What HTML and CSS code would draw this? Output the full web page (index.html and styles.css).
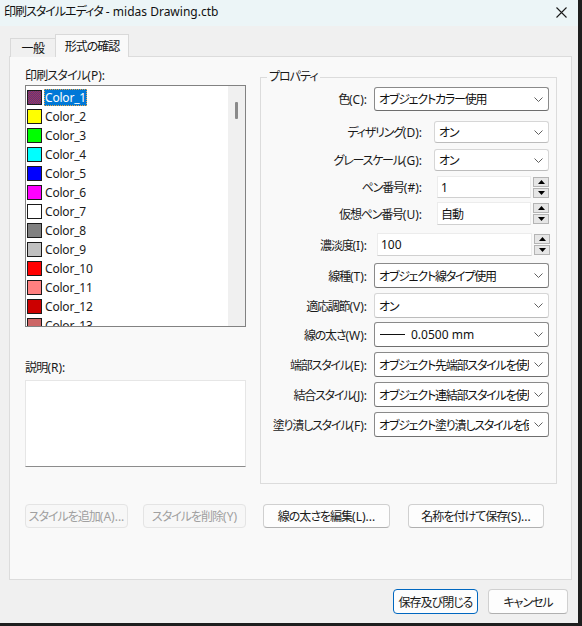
FILE: index.html
```html
<!DOCTYPE html>
<html lang="ja">
<head>
<meta charset="utf-8">
<title>印刷スタイルエディタ</title>
<link rel="stylesheet" href="styles.css">
</head>
<body>
<div class="window">
  <div class="titlebar">
    <span class="title"><span class="jp">印刷スタイルエディタ</span> - midas Drawing.ctb</span>
    <svg class="close" width="11" height="11" viewBox="0 0 11 11"><path d="M0.5 0.5 L10.5 10.5 M10.5 0.5 L0.5 10.5" stroke="#1a1a1a" stroke-width="1.1" fill="none"/></svg>
  </div>
  <div class="tabs">
    <div class="tab">一般</div>
    <div class="tab active">形式の確認</div>
  </div>
  <div class="panel">
    <div class="main">
      <div class="leftcol">
        <div class="lbl">印刷スタイル<span class="a">(P):</span></div>
        <div class="listbox">
          <div class="items">
            <div class="item"><span class="sw sel-sw"></span><span class="nm sel">Color_1</span></div>
            <div class="item"><span class="sw c2"></span><span class="nm">Color_2</span></div>
            <div class="item"><span class="sw c3"></span><span class="nm">Color_3</span></div>
            <div class="item"><span class="sw c4"></span><span class="nm">Color_4</span></div>
            <div class="item"><span class="sw c5"></span><span class="nm">Color_5</span></div>
            <div class="item"><span class="sw c6"></span><span class="nm">Color_6</span></div>
            <div class="item"><span class="sw c7"></span><span class="nm">Color_7</span></div>
            <div class="item"><span class="sw c8"></span><span class="nm">Color_8</span></div>
            <div class="item"><span class="sw c9"></span><span class="nm">Color_9</span></div>
            <div class="item"><span class="sw c10"></span><span class="nm">Color_10</span></div>
            <div class="item"><span class="sw c11"></span><span class="nm">Color_11</span></div>
            <div class="item"><span class="sw c12"></span><span class="nm">Color_12</span></div>
            <div class="item"><span class="sw c13"></span><span class="nm">Color_13</span></div>
          </div>
          <div class="vscroll"><div class="thumb"></div></div>
        </div>
        <div class="lbl desc-lbl">説明<span class="a">(R):</span></div>
        <div class="desc"></div>
      </div>
      <div class="rightcol">
        <div class="group">
          <span class="group-title">プロパティ</span>
          <div class="row r1">
            <span class="plabel w-s">色<span class="a">(C):</span></span>
            <div class="combo strong wide"><span class="ctext">オブジェクトカラー使用</span><svg class="chev" width="9" height="5" viewBox="0 0 9 5"><path d="M0.5 0.5 L4.5 4.5 L8.5 0.5" stroke="#606060" fill="none"/></svg></div>
          </div>
          <div class="row r2">
            <span class="plabel w-l">ディザリング<span class="a">(D):</span></span>
            <div class="combo light narrow"><span class="ctext">オン</span><svg class="chev" width="9" height="5" viewBox="0 0 9 5"><path d="M0.5 0.5 L4.5 4.5 L8.5 0.5" stroke="#606060" fill="none"/></svg></div>
          </div>
          <div class="row r3">
            <span class="plabel w-l">グレースケール<span class="a">(G):</span></span>
            <div class="combo light narrow"><span class="ctext">オン</span><svg class="chev" width="9" height="5" viewBox="0 0 9 5"><path d="M0.5 0.5 L4.5 4.5 L8.5 0.5" stroke="#606060" fill="none"/></svg></div>
          </div>
          <div class="row r4">
            <span class="plabel w-l">ペン番号<span class="a">(#):</span></span>
            <div class="field pen latin">1</div>
            <div class="spin"><div class="sbtn"><svg width="7" height="4" viewBox="0 0 7 4"><path d="M0 4 L3.5 0 L7 4 Z" fill="#000"/></svg></div><div class="sbtn"><svg width="7" height="4" viewBox="0 0 7 4"><path d="M0 0 L3.5 4 L7 0 Z" fill="#000"/></svg></div></div>
          </div>
          <div class="row r5">
            <span class="plabel w-l">仮想ペン番号<span class="a">(U):</span></span>
            <div class="field pen">自動</div>
            <div class="spin"><div class="sbtn"><svg width="7" height="4" viewBox="0 0 7 4"><path d="M0 4 L3.5 0 L7 4 Z" fill="#000"/></svg></div><div class="sbtn"><svg width="7" height="4" viewBox="0 0 7 4"><path d="M0 0 L3.5 4 L7 0 Z" fill="#000"/></svg></div></div>
          </div>
          <div class="row r6">
            <span class="plabel w-s">濃淡度<span class="a">(I):</span></span>
            <div class="field shade latin">100</div>
            <div class="spin"><div class="sbtn"><svg width="7" height="4" viewBox="0 0 7 4"><path d="M0 4 L3.5 0 L7 4 Z" fill="#000"/></svg></div><div class="sbtn"><svg width="7" height="4" viewBox="0 0 7 4"><path d="M0 0 L3.5 4 L7 0 Z" fill="#000"/></svg></div></div>
          </div>
          <div class="row r7">
            <span class="plabel w-s">線種<span class="a">(T):</span></span>
            <div class="combo strong wide"><span class="ctext">オブジェクト線タイプ使用</span><svg class="chev" width="9" height="5" viewBox="0 0 9 5"><path d="M0.5 0.5 L4.5 4.5 L8.5 0.5" stroke="#606060" fill="none"/></svg></div>
          </div>
          <div class="row r8">
            <span class="plabel w-s">適応調節<span class="a">(V):</span></span>
            <div class="combo light wide"><span class="ctext">オン</span><svg class="chev" width="9" height="5" viewBox="0 0 9 5"><path d="M0.5 0.5 L4.5 4.5 L8.5 0.5" stroke="#606060" fill="none"/></svg></div>
          </div>
          <div class="row r9">
            <span class="plabel w-s">線の太さ<span class="a">(W):</span></span>
            <div class="combo strong wide"><span class="ctext latin"><span class="lw"></span>0.0500 mm</span><svg class="chev" width="9" height="5" viewBox="0 0 9 5"><path d="M0.5 0.5 L4.5 4.5 L8.5 0.5" stroke="#606060" fill="none"/></svg></div>
          </div>
          <div class="row r10">
            <span class="plabel w-s">端部スタイル<span class="a">(E):</span></span>
            <div class="combo strong wide"><span class="ctext">オブジェクト先端部スタイルを使用</span><svg class="chev" width="9" height="5" viewBox="0 0 9 5"><path d="M0.5 0.5 L4.5 4.5 L8.5 0.5" stroke="#606060" fill="none"/></svg></div>
          </div>
          <div class="row r11">
            <span class="plabel w-s">結合スタイル<span class="a">(J):</span></span>
            <div class="combo strong wide"><span class="ctext">オブジェクト連結部スタイルを使用</span><svg class="chev" width="9" height="5" viewBox="0 0 9 5"><path d="M0.5 0.5 L4.5 4.5 L8.5 0.5" stroke="#606060" fill="none"/></svg></div>
          </div>
          <div class="row r12">
            <span class="plabel w-s">塗り潰しスタイル<span class="a">(F):</span></span>
            <div class="combo strong wide"><span class="ctext">オブジェクト塗り潰しスタイルを使用</span><svg class="chev" width="9" height="5" viewBox="0 0 9 5"><path d="M0.5 0.5 L4.5 4.5 L8.5 0.5" stroke="#606060" fill="none"/></svg></div>
          </div>
        </div>
      </div>
    </div>
    <div class="actions">
      <button class="btn disabled b-add">スタイルを追加<span class="a">(A)...</span></button>
      <button class="btn disabled b-del">スタイルを削除<span class="a">(Y)</span></button>
      <button class="btn b-lw">線の太さを編集<span class="a">(L)...</span></button>
      <button class="btn b-save">名称を付けて保存<span class="a">(S)...</span></button>
    </div>
  </div>
  <div class="footer">
    <button class="btn primary b-close">保存及び閉じる</button>
    <button class="btn b-cancel">キャンセル</button>
  </div>
</div>
</body>
</html>
```
FILE: styles.css
```css
html, body {
  margin: 0;
  padding: 0;
}
body {
  background: #1e1e1e;
  width: 582px;
  height: 626px;
  overflow: hidden;
  font-family: "Noto Sans", "Noto Sans CJK JP", sans-serif;
  font-size: 12px;
  font-feature-settings: "palt";
  color: #1a1a1a;
}
.window {
  width: 578px;
  height: 623px;
  background: #f0f0f0;
  display: flex;
  flex-direction: column;
}
.titlebar {
  height: 26px;
  background: #ecf5f7;
  display: flex;
  align-items: center;
  justify-content: space-between;
  padding: 0 11px 0 4px;
  flex: none;
}
.title {
  line-height: 16px;
  color: #111;
  margin-top: -2px;
}
.jp {
  letter-spacing: -1px;
}
.close {
  margin-top: -2px;
}
.tabs {
  display: flex;
  align-items: flex-end;
  height: 31px;
  padding-left: 10px;
  flex: none;
  position: relative;
  z-index: 1;
  margin-bottom: -1px;
}
.tab {
  width: 46px;
  height: 19px;
  line-height: 19px;
  text-align: center;
  box-sizing: border-box;
  border: 1px solid #d9d9d9;
  border-bottom: none;
  background: #f0f0f0;
  color: #111;
  letter-spacing: -0.5px;
}
.tab.active {
  width: 74px;
  height: 23px;
  line-height: 23px;
  background: #f9f9f9;
  margin-left: -1px;
  letter-spacing: -1px;
}
.panel {
  margin: 0 6px 0 9px;
  height: 524px;
  border: 1px solid #dcdcdc;
  background: #f9f9f9;
  padding: 9px 0 0 15px;
  box-sizing: border-box;
  flex: none;
}
.main {
  display: grid;
  grid-template-columns: 221px 297px;
  column-gap: 14px;
  align-items: start;
}
.lbl {
  line-height: 19px;
  height: 19px;
  letter-spacing: -0.8px;
}
.a {
  letter-spacing: 0;
}
.listbox {
  height: 242px;
  border: 1px solid #828282;
  background: #fff;
  box-sizing: border-box;
  display: flex;
  overflow: hidden;
}
.items {
  flex: 1;
  padding: 2px 0 0 1px;
  overflow: hidden;
}
.item {
  height: 19px;
  display: flex;
  align-items: center;
}
.sw {
  width: 15px;
  height: 15px;
  box-sizing: border-box;
  border: 1px solid #1a1a1a;
  margin-right: 2px;
  flex: none;
}
.sel-sw {
  background: repeating-conic-gradient(#b3324d 0 25%, #4b3a8c 0 50%) 0 0 / 2px 2px;
}
.c2 { background: #ffff00; }
.c3 { background: #00ff00; }
.c4 { background: #00ffff; }
.c5 { background: #0000ff; }
.c6 { background: #ff00ff; }
.c7 { background: #ffffff; }
.c8 { background: #808080; }
.c9 { background: #c0c0c0; }
.c10 { background: #ff0000; }
.c11 { background: #ff8080; }
.c12 { background: #cc0000; }
.c13 { background: #cc6666; }
.nm {
  line-height: 17px;
  padding: 0 1px;
  color: #1a1a1a;
  letter-spacing: -0.2px;
}
.nm.sel {
  background: #0078d7;
  color: #fff;
  outline: 1px dotted #e8a64a;
  outline-offset: -1px;
}
.vscroll {
  width: 17px;
  background: #f0f0f0;
  flex: none;
  display: flex;
  justify-content: center;
  padding-top: 16px;
  box-sizing: border-box;
}
.thumb {
  width: 3px;
  height: 17px;
  background: #8a8a8a;
  border-radius: 1px;
}
.desc-lbl {
  margin-top: 31px;
}
.desc {
  margin-top: 3px;
  height: 87px;
  background: #fff;
  border: 1px solid #e6e6e6;
  border-bottom: 1px solid #8c8c8c;
  box-sizing: border-box;
}
.rightcol {
  padding-top: 11px;
}
.group {
  position: relative;
  height: 407px;
  border: 1px solid #dcdcdc;
  box-sizing: border-box;
  padding-top: 9px;
}
.group-title {
  position: absolute;
  top: -9px;
  left: 6px;
  line-height: 16px;
  padding: 0 2px;
  background: #f9f9f9;
  letter-spacing: -1px;
}
.row {
  display: flex;
  align-items: center;
}
.plabel {
  text-align: right;
  white-space: nowrap;
  flex: none;
  letter-spacing: -1.2px;
}
.w-s { width: 106px; }
.w-l { width: 161px; }
.combo {
  box-sizing: border-box;
  background: #fff;
  border-radius: 3px;
  display: flex;
  align-items: center;
  padding: 0 5px 0 4px;
  flex: none;
}
.combo.strong {
  border: 1px solid #8a8a8a;
  border-bottom-color: #6e6e6e;
}
.combo.light {
  border: 1px solid #d6d6d6;
  border-bottom-color: #bcbcbc;
}
.combo.wide {
  width: 175px;
  margin-left: 7px;
}
.combo.narrow {
  width: 115px;
  margin-left: 12px;
}
.ctext {
  flex: 1;
  overflow: hidden;
  white-space: nowrap;
  color: #111;
  display: flex;
  align-items: center;
  letter-spacing: -1.2px;
}
.chev {
  flex: none;
  margin-left: 5px;
}
.lw {
  display: inline-block;
  width: 25px;
  height: 1px;
  background: #111;
  margin: 0 6px 0 1px;
}
.field {
  box-sizing: border-box;
  background: #fff;
  border: 1px solid #ececec;
  border-bottom-color: #d0d0d0;
  padding-left: 3px;
  display: flex;
  align-items: center;
  flex: none;
  color: #111;
  letter-spacing: -1px;
}
.ctext.latin, .field.latin {
  letter-spacing: 0;
}
.field.pen {
  width: 94px;
  margin-left: 15px;
}
.field.shade {
  width: 155px;
  margin-left: 10px;
}
.spin {
  margin-left: 2px;
  width: 16px;
  display: flex;
  flex-direction: column;
  gap: 1px;
}
.sbtn {
  height: 10px;
  box-sizing: border-box;
  border: 1px solid #b4b4b4;
  background: #e6e6e6;
  display: flex;
  align-items: center;
  justify-content: center;
}
.r1 { height: 24px; }
.r1 .combo { height: 24px; }
.r2 { margin-top: 10px; }
.r2 .combo, .r3 .combo { height: 22px; }
.r3 { margin-top: 6px; }
.r4 { margin-top: 5px; }
.r4 .field { height: 22px; }
.r5 { margin-top: 4px; }
.r5 .field { height: 23px; }
.r6 { margin-top: 8px; }
.r6 .field { height: 23px; }
.r7 { margin-top: 7px; }
.r7 .combo, .r8 .combo, .r9 .combo, .r10 .combo, .r11 .combo, .r12 .combo { height: 25px; }
.r8, .r10, .r11, .r12 { margin-top: 5px; }
.r9 { margin-top: 4px; }
.actions {
  display: flex;
  margin-top: 20px;
}
.btn {
  font-family: inherit;
  font-size: 12px;
  font-feature-settings: "palt";
  letter-spacing: -1px;
  height: 24px;
  box-sizing: border-box;
  border-radius: 4px;
  padding: 0;
  background: #fdfdfd;
  border: 1px solid #d0d0d0;
  border-bottom-color: #b0b0b0;
  color: #1a1a1a;
  white-space: nowrap;
}
.btn.disabled {
  background: #f7f7f7;
  border: 1px solid #e4e4e4;
  color: #a0a0a0;
}
.b-add { width: 103px; }
.b-del { width: 103px; margin-left: 15px; }
.b-lw { width: 127px; margin-left: 17px; }
.b-save { width: 136px; margin-left: 18px; }
.footer {
  display: flex;
  justify-content: flex-end;
  padding: 9px 10px 0 0;
}
.footer .btn {
  height: 25px;
}
.b-close {
  width: 85px;
  border: 1px solid #0067c0;
}
.b-cancel {
  width: 80px;
  margin-left: 10px;
}
```
